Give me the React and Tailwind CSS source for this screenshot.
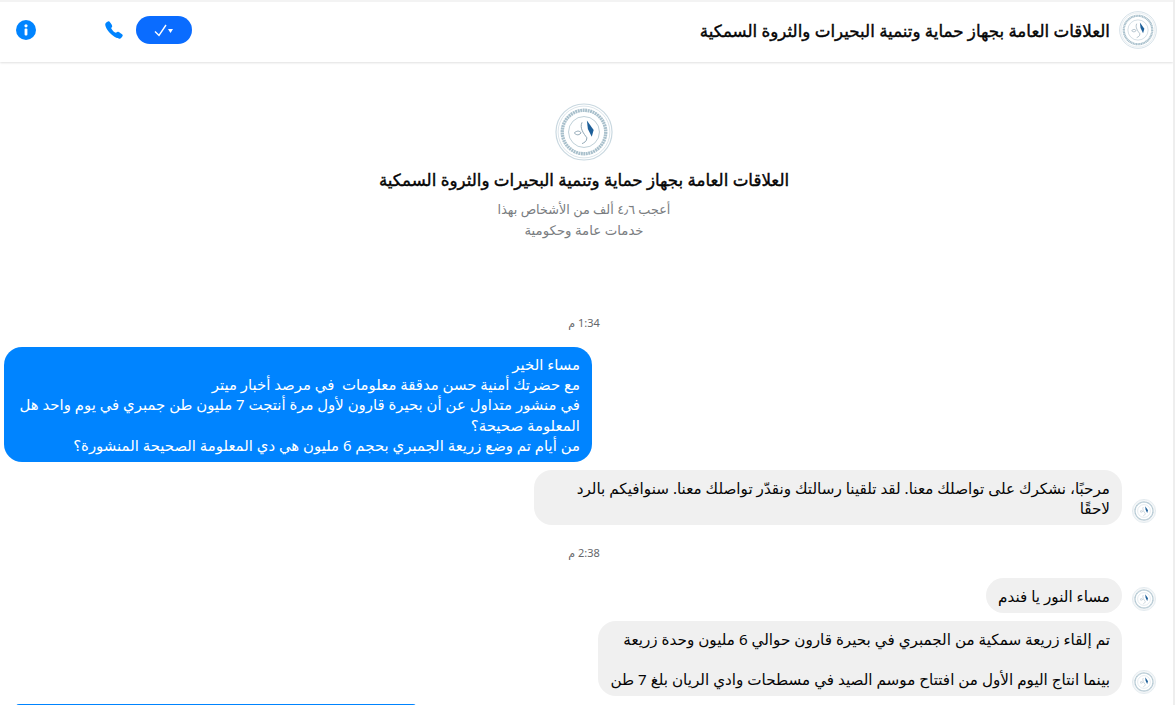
import React from "react";
import { IoCall } from "react-icons/io5";

const Logo = ({ className }) => (
  <svg viewBox="0 0 60 60" className={className}>
    <circle cx="30" cy="30" r="29" fill="#fff" stroke="#c9d8e0" strokeWidth="1.2" />
    <circle cx="30" cy="30" r="26.8" fill="none" stroke="#dbe4e9" strokeWidth="1" />
    <circle cx="30" cy="30" r="22.5" fill="none" stroke="#a9c0cc" strokeWidth="3.5" strokeDasharray="2 0.6" />
    <circle cx="30" cy="30" r="16" fill="#fff" stroke="#bccdd6" strokeWidth="1" />
    <path d="M33 18 L40 28 L38 35 L34 27 Z" fill="#1d5f99" />
    <path d="M28 20 C25 26 30 32 33 36 C33 40 30 41 28 42" fill="none" stroke="#8aa2b1" strokeWidth="1" />
    <path d="M20 31 C23 28 26 29 27 31 C24 34 22 33 20 31 Z" fill="none" stroke="#8aa2b1" strokeWidth="1" />
  </svg>
);

const Avatar = () => <Logo className="w-6 h-6 shrink-0 mb-[2px]" />;

const Time = ({ children }) => (
  <div className="text-center text-[11px] leading-4 text-[#65676b] pr-[5px]">{children}</div>
);

const Incoming = ({ children, className }) => (
  <div className="flex items-end gap-[10px] pr-[17px]">
    <Avatar />
    <div className={`bg-[#f0f0f0] text-[#050505] rounded-[18px] px-3 pt-2 pb-[7px] text-[15.2px] leading-[20px] ${className}`}>
      {children}
    </div>
  </div>
);

const titleCls = "font-normal text-[16.7px] text-[#050505] whitespace-nowrap [-webkit-text-stroke:0.4px_#050505]";

export default function App() {
  return (
    <div dir="rtl" className="h-[705px] w-[1175px] overflow-hidden bg-white border-r-2 border-[#eeeeee] font-['Noto_Sans','DejaVu_Sans',sans-serif]">
      <header className="h-[62px] flex items-center pr-[16px] pl-[16px] pb-[4px] border-t-2 border-[#f3f3f3] shadow-[0_1px_2px_rgba(0,0,0,0.12)]">
        <Logo className="w-[38px] h-[38px] shrink-0" />
        <h1 className={`mr-[9px] pt-[2px] ${titleCls}`}>العلاقات العامة بجهاز حماية وتنمية البحيرات والثروة السمكية</h1>
        <div className="mr-auto flex items-center">
          <button className="w-[56px] h-[28px] rounded-full bg-[#0a6cff] flex items-center justify-center">
            <svg viewBox="0 0 26 16" className="w-[26px] h-4" dir="ltr">
              <path d="M4 9.5 L8 13.5 L15 3" fill="none" stroke="#fff" strokeWidth="1.4" />
              <path d="M17 7 H22 L19.5 11 Z" fill="#fff" />
            </svg>
          </button>
          <IoCall className="w-5 h-5 text-[#0084ff] mr-[12px]" />
          <svg viewBox="0 0 20 20" className="w-5 h-5 mr-[68px]">
            <circle cx="10" cy="10" r="10" fill="#0084ff" />
            <circle cx="10" cy="5.8" r="1.6" fill="#fff" />
            <rect x="8.6" y="8.6" width="2.8" height="7" rx="1" fill="#fff" />
          </svg>
        </div>
      </header>

      <section className="flex flex-col items-center pt-[41px] pr-[5px]">
        <Logo className="w-[58px] h-[58px]" />
        <h2 className={`mt-[7px] leading-[24px] ${titleCls}`}>العلاقات العامة بجهاز حماية وتنمية البحيرات والثروة السمكية</h2>
        <p className="mt-[7px] text-[12.8px] leading-[21px] text-[#7a7d81]">أعجب ٤٫٦ ألف من الأشخاص بهذا</p>
        <p className="text-[13.3px] leading-[21px] text-[#7a7d81]">خدمات عامة وحكومية</p>
      </section>

      <div className="mt-[74px]"><Time>1:34 م</Time></div>

      <div className="mt-[16px] flex justify-end pl-[4px]">
        <div className="w-[588px] rounded-[18px] bg-[#0084ff] text-white px-3 py-[7px] text-[14.9px] leading-[20.2px]">
          مساء الخير
          <br />
          مع حضرتك أمنية حسن مدققة معلومات&nbsp; في مرصد أخبار ميتر
          <br />
          في منشور متداول عن أن بحيرة قارون لأول مرة أنتجت 7 مليون طن جمبري في يوم واحد هل المعلومة صحيحة؟
          <br />
          من أيام تم وضع زريعة الجمبري بحجم 6 مليون هي دي المعلومة الصحيحة المنشورة؟
        </div>
      </div>

      <div className="mt-[8px]">
        <Incoming className="w-[588px]">
          مرحبًا، نشكرك على تواصلك معنا. لقد تلقينا رسالتك ونقدّر تواصلك معنا. سنوافيكم بالرد
          <br />
          لاحقًا
        </Incoming>
      </div>

      <div className="mt-[20px]"><Time>2:38 م</Time></div>

      <div className="mt-[17px]">
        <Incoming>مساء النور يا فندم</Incoming>
      </div>
      <div className="mt-[8px]">
        <Incoming>
          تم إلقاء زريعة سمكية من الجمبري في بحيرة قارون حوالي 6 مليون وحدة زريعة
          <br />
          <br />
          بينما انتاج اليوم الأول من افتتاح موسم الصيد في مسطحات وادي الريان بلغ 7 طن
        </Incoming>
      </div>

      <div className="mt-[8px] flex justify-end pl-[16px]">
        <div className="w-[400px] h-10 rounded-t-[3px] bg-[#0084ff]" />
      </div>
    </div>
  );
}
